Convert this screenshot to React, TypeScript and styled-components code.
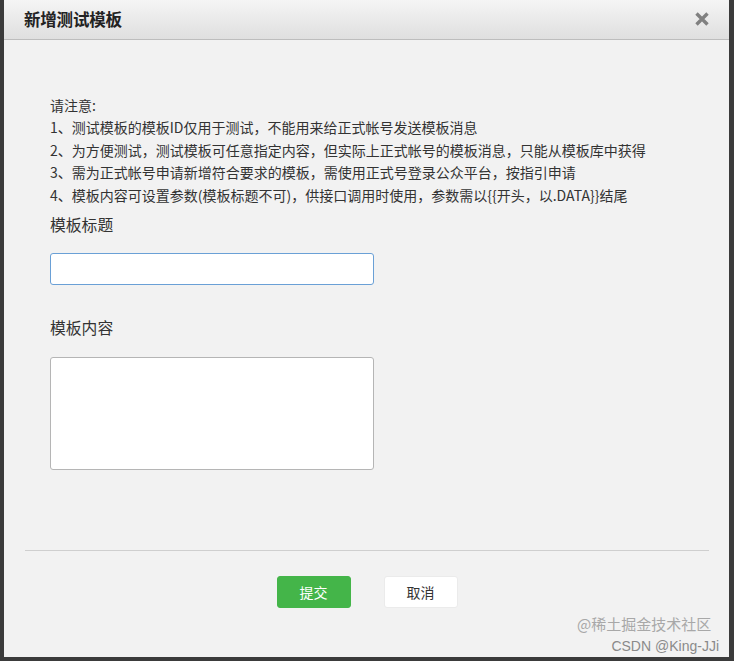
import styled, { createGlobalStyle } from 'styled-components';

const GlobalStyle = createGlobalStyle`
  html, body {
    margin: 0;
    padding: 0;
    background-color: #3b3b3b;
    font-family: "Noto Sans CJK SC", "Noto Sans", sans-serif;
  }
`;

const Backdrop = styled.div`
  width: 734px;
  height: 661px;
  padding-left: 4px;
  box-sizing: border-box;
  overflow: hidden;
`;

const Dialog = styled.div`
  position: relative;
  width: 725px;
  height: 657px;
  background-color: #f2f2f2;
  display: flex;
  flex-direction: column;
`;

const Header = styled.div`
  height: 39px;
  display: flex;
  align-items: center;
  justify-content: space-between;
  padding: 0 19px 0 20px;
  background: linear-gradient(#f5f5f5, #dfdfdf);
  border-bottom: 1px solid #bdbdbd;
`;

const Title = styled.div`
  font-size: 16.5px;
  font-weight: 700;
  color: #222;
  letter-spacing: -0.2px;
`;

const CloseButton = styled.button`
  width: 16px;
  height: 18px;
  padding: 0;
  border: none;
  background: none;
  display: flex;
  align-items: center;
  justify-content: center;
  cursor: pointer;
`;

const Body = styled.div`
  flex: 1;
  padding: 54px 46px 0 46px;
  display: flex;
  flex-direction: column;
`;

const Notes = styled.div`
  font-size: 14px;
  line-height: 22.5px;
  color: #333;
`;

const FieldLabel = styled.div<{ $gap: number }>`
  margin-top: ${(props) => props.$gap}px;
  font-size: 15.8px;
  line-height: 22px;
  color: #333;
`;

const TitleInput = styled.input`
  margin-top: 17px;
  width: 324px;
  height: 32px;
  box-sizing: border-box;
  border: 1px solid #6aa0d6;
  border-radius: 3px;
  background-color: #fff;
  outline: none;
`;

const ContentArea = styled.textarea`
  margin-top: 18px;
  width: 324px;
  height: 113px;
  box-sizing: border-box;
  border: 1px solid #b5b5b5;
  border-radius: 3px;
  background-color: #fff;
  resize: none;
  outline: none;
`;

const Divider = styled.div`
  margin: 80px 20px 0 21px;
  height: 1px;
  background-color: #cfcfcf;
`;

const Footer = styled.div`
  display: flex;
  justify-content: center;
  gap: 33px;
  padding-top: 25px;
  padding-left: 1px;
  height: 82px;
`;

const ActionButton = styled.button<{ $primary?: boolean }>`
  width: 74px;
  height: 32px;
  border-radius: 3px;
  font-family: "Noto Sans CJK SC", sans-serif;
  font-size: 14px;
  cursor: pointer;
  color: ${(props) => (props.$primary ? '#fff' : '#333')};
  background-color: ${(props) => (props.$primary ? '#44b549' : '#fff')};
  border: 1px solid ${(props) => (props.$primary ? '#44b549' : '#ebebeb')};
`;

const Watermark = styled.div`
  position: absolute;
  right: 10px;
  bottom: 2px;
  width: 142px;
  height: 40px;
  pointer-events: none;
`;

const MarkTop = styled.span`
  position: absolute;
  left: 0;
  top: 0;
  font-size: 15px;
  line-height: 18px;
  color: #a8a8a8;
  white-space: nowrap;
`;

const MarkBottom = styled.span`
  position: absolute;
  right: 0;
  top: 23px;
  font-family: "Liberation Sans", sans-serif;
  font-size: 14px;
  line-height: 16px;
  color: #8a8a8a;
  white-space: nowrap;
`;

const notes = [
  '请注意:',
  '1、测试模板的模板ID仅用于测试，不能用来给正式帐号发送模板消息',
  '2、为方便测试，测试模板可任意指定内容，但实际上正式帐号的模板消息，只能从模板库中获得',
  '3、需为正式帐号申请新增符合要求的模板，需使用正式号登录公众平台，按指引申请',
  '4、模板内容可设置参数(模板标题不可)，供接口调用时使用，参数需以{{开头，以.DATA}}结尾',
];

function App() {
  return (
    <>
      <GlobalStyle />
      <Backdrop>
        <Dialog>
          <Header>
            <Title>新增测试模板</Title>
            <CloseButton aria-label="关闭">
              <svg width="14" height="14" viewBox="0 0 14 14">
                <path
                  d="M1.5 1.5 L12.5 12.5 M12.5 1.5 L1.5 12.5"
                  stroke="#808080"
                  strokeWidth="3.4"
                  strokeLinecap="butt"
                />
              </svg>
            </CloseButton>
          </Header>
          <Body>
            <Notes>
              {notes.map((line) => (
                <div key={line}>{line}</div>
              ))}
            </Notes>
            <FieldLabel $gap={8}>模板标题</FieldLabel>
            <TitleInput type="text" />
            <FieldLabel $gap={32}>模板内容</FieldLabel>
            <ContentArea />
          </Body>
          <Divider />
          <Footer>
            <ActionButton $primary>提交</ActionButton>
            <ActionButton>取消</ActionButton>
          </Footer>
          <Watermark>
            <MarkTop>@稀土掘金技术社区</MarkTop>
            <MarkBottom>CSDN @King-JJi</MarkBottom>
          </Watermark>
        </Dialog>
      </Backdrop>
    </>
  );
}

export default App;
